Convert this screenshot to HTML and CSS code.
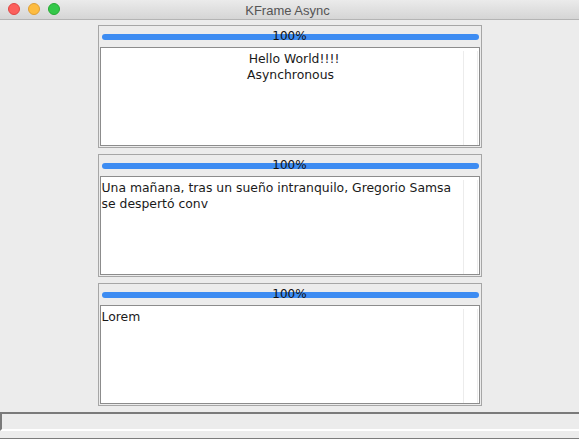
FILE: index.html
```html
<!DOCTYPE html>
<html>
<head>
<meta charset="utf-8">
<link rel="stylesheet" href="styles.css">
</head>
<body>
<div class="window">
  <div class="titlebar">
    <div class="lights">
      <span class="light red"></span>
      <span class="light yellow"></span>
      <span class="light green"></span>
    </div>
    <div class="title">KFrame Async</div>
  </div>
  <div class="content">
    <div class="panel">
      <div class="progress"><div class="bar"></div><span class="pct">100%</span></div>
      <div class="textarea">
        <div class="text centered"><span class="l1">Hello World!!!!</span><br>Asynchronous</div>
        <div class="scroll"></div>
      </div>
    </div>
    <div class="panel">
      <div class="progress"><div class="bar"></div><span class="pct">100%</span></div>
      <div class="textarea">
        <div class="text">Una mañana, tras un sueño intranquilo, Gregorio Samsa<br>se despertó conv</div>
        <div class="scroll"></div>
      </div>
    </div>
    <div class="panel">
      <div class="progress"><div class="bar"></div><span class="pct">100%</span></div>
      <div class="textarea">
        <div class="text">Lorem</div>
        <div class="scroll"></div>
      </div>
    </div>
  </div>
  <div class="status"></div>
  <div class="bottomline"></div>
</div>
</body>
</html>
```
FILE: styles.css
```css
html, body {
  margin: 0;
  padding: 0;
  background: #ececec;
}
.window {
  width: 579px;
  height: 439px;
  display: flex;
  flex-direction: column;
  font-family: "DejaVu Sans", "Liberation Sans", sans-serif;
  color: #1a1a1a;
}
.titlebar {
  position: relative;
  height: 19px;
  border-bottom: 1px solid #b4b4b4;
  background: linear-gradient(#ebebeb, #d5d5d5);
  display: flex;
  align-items: center;
  justify-content: center;
}
.lights {
  position: absolute;
  left: 8px;
  top: 3px;
  display: flex;
  gap: 8px;
}
.light {
  width: 12px;
  height: 12px;
  border-radius: 50%;
  box-sizing: border-box;
}
.red { background: #fc605c; border: 1px solid #df4744; }
.yellow { background: #fdbc40; border: 1px solid #de9f34; }
.green { background: #34c84a; border: 1px solid #27aa35; }
.title {
  font-family: "Liberation Sans", "DejaVu Sans", sans-serif;
  font-size: 13px;
  color: #555;
  padding-top: 1px;
  padding-right: 4px;
}
.content {
  padding-top: 5px;
  display: flex;
  flex-direction: column;
  align-items: center;
  gap: 6px;
}
.panel {
  width: 384px;
  box-sizing: border-box;
  border: 1px solid #a6a6a6;
  padding: 0 1px 1px 1px;
}
.progress {
  position: relative;
  height: 21px;
}
.bar {
  position: absolute;
  left: 2px;
  right: 1px;
  top: 8px;
  height: 6px;
  border-radius: 3px;
  background: #3d8cf2;
}
.pct {
  position: absolute;
  left: 0;
  right: 0;
  top: 3px;
  text-align: center;
  font-size: 12px;
  line-height: 14px;
  color: #111;
}
.textarea {
  height: 99px;
  box-sizing: border-box;
  border: 1px solid #8c8c8c;
  background: #fff;
  display: flex;
}
.text {
  flex: 1;
  padding: 3px 0 0 1px;
  font-size: 12.4px;
  line-height: 16px;
  white-space: nowrap;
}
.text.centered {
  text-align: center;
  padding-left: 18px;
}
.text .l1 {
  padding-left: 7px;
}
.scroll {
  width: 13px;
  margin: 3px 1px 0 0;
  border-left: 1px solid #ececec;
  border-right: 1px solid #ececec;
}
.status {
  margin-top: 6px;
  height: 15px;
  border-top: 2px solid #7a7a7a;
  border-left: 2px solid #7a7a7a;
  border-bottom: 2px solid #ffffff;
  background: #ececec;
}
.bottomline {
  margin-top: auto;
  height: 1px;
  background: #7c7c7c;
}
```
